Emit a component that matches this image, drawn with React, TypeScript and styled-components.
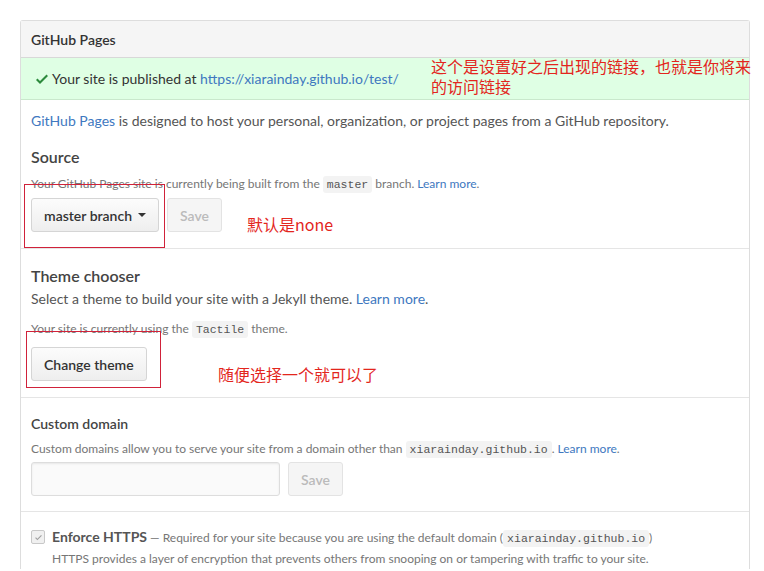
import React from "react";
import styled, { createGlobalStyle } from "styled-components";

const Global = createGlobalStyle`
  html, body { margin: 0; padding: 0; background: #fff; }
  body {
    font-family: Lato, "Open Sans", "Liberation Sans", sans-serif;
    font-size: 14px;
    color: #333;
  }
`;

const Page = styled.div`
  padding: 20px 14px 0 20px;
`;

const Box = styled.div`
  width: 728px;
  border: 1px solid #ddd;
  border-bottom: none;
  border-radius: 3px 3px 0 0;
  background: #fff;
`;

const BoxHeader = styled.div`
  height: 36px;
  display: flex;
  align-items: center;
  padding: 0 10px;
  background: #f5f5f5;
  border-bottom: 1px solid #d8d8d8;
  font-size: 14px;
  font-weight: 600;
  color: #333;
`;

const Flash = styled.div`
  position: relative;
  height: 41px;
  display: flex;
  align-items: center;
  gap: 4px;
  padding: 0 15px;
  background: #dfffe4;
  border-bottom: 1px solid #c9e8cc;
  color: #333;
`;

const Section = styled.div<{ $pt?: number; $pb?: number; $last?: boolean }>`
  position: relative;
  padding: ${(p) => p.$pt ?? 15}px 10px ${(p) => p.$pb ?? 15}px;
  border-bottom: ${(p) => (p.$last ? "none" : "1px solid #e5e5e5")};
`;

const Text = styled.p`
  margin: 0;
  font-size: 14px;
  line-height: 21px;
  color: #555;
`;

const Heading = styled.h3<{ $size?: number; $top?: number }>`
  margin: ${(p) => p.$top ?? 0}px 0 0;
  font-size: ${(p) => p.$size ?? 16}px;
  font-weight: 600;
  line-height: 24px;
  color: #444;
`;

const Note = styled.p<{ $top?: number }>`
  margin: ${(p) => p.$top ?? 2}px 0 0;
  font-size: 12px;
  line-height: 20px;
  color: #767676;
`;

const Link = styled.a`
  color: #4078c0;
  text-decoration: none;
`;

const Code = styled.code`
  font-family: "Liberation Mono", "DejaVu Sans Mono", monospace;
  font-size: 11.5px;
  padding: 2px 4px;
  background: #f3f3f3;
  border-radius: 3px;
  color: #555;
`;

const Row = styled.div<{ $top?: number }>`
  position: relative;
  display: flex;
  align-items: center;
  gap: 8px;
  margin-top: ${(p) => p.$top ?? 6}px;
`;

const Button = styled.button<{ $disabled?: boolean }>`
  height: 34px;
  padding: 0 12px;
  display: inline-flex;
  align-items: center;
  gap: 6px;
  font-family: inherit;
  font-size: 14px;
  font-weight: 600;
  border-radius: 3px;
  cursor: pointer;
  color: ${(p) => (p.$disabled ? "#bbb" : "#333")};
  background: ${(p) =>
    p.$disabled ? "#f5f5f5" : "linear-gradient(#fcfcfc, #eee)"};
  border: 1px solid ${(p) => (p.$disabled ? "#e3e3e3" : "#d5d5d5")};
`;

const Caret = styled.span`
  width: 0;
  height: 0;
  border-left: 4px solid transparent;
  border-right: 4px solid transparent;
  border-top: 4px solid #333;
`;

const Input = styled.input`
  width: 249px;
  height: 34px;
  box-sizing: border-box;
  border: 1px solid #ddd;
  border-radius: 3px;
  background: #fafafa;
  box-shadow: inset 0 1px 2px rgba(0, 0, 0, 0.075);
`;

const CheckRow = styled.div`
  display: flex;
  align-items: flex-start;
  gap: 7px;
`;

const CheckBox = styled.span`
  width: 12px;
  height: 12px;
  margin-top: 3px;
  border: 1px solid #c8c8c8;
  border-radius: 2px;
  background: #f0f0f0;
  display: flex;
  align-items: center;
  justify-content: center;
  flex-shrink: 0;
`;

const Strong = styled.strong`
  font-size: 14px;
  font-weight: 700;
  color: #555;
`;

const Small = styled.span`
  font-size: 12px;
  color: #767676;
`;

const CheckText = styled.div`
  line-height: 20px;
  font-size: 12px;
  color: #767676;
`;

const RedBox = styled.div<{ $l: number; $t: number; $w: number; $h: number }>`
  position: absolute;
  left: ${(p) => p.$l}px;
  top: ${(p) => p.$t}px;
  width: ${(p) => p.$w}px;
  height: ${(p) => p.$h}px;
  border: 1px solid #d0223a;
  pointer-events: none;
`;

const RedText = styled.div<{ $l: number; $t: number; $w?: number }>`
  position: absolute;
  left: ${(p) => p.$l}px;
  top: ${(p) => p.$t}px;
  ${(p) => (p.$w ? `width: ${p.$w}px;` : "white-space: nowrap;")}
  font-family: "Noto Sans CJK SC", "Noto Sans", sans-serif;
  font-size: 16px;
  line-height: 20px;
  color: #e3261d;
`;

const CheckIcon = () => (
  <svg width="12" height="16" viewBox="0 0 12 16" fill="#2c8a3c">
    <path d="M12 5l-8 8-4-4 1.5-1.5L4 10l6.5-6.5L12 5z" />
  </svg>
);

const SmallCheck = () => (
  <svg width="9" height="9" viewBox="0 0 12 16" fill="#a0a0a0">
    <path d="M12 5l-8 8-4-4 1.5-1.5L4 10l6.5-6.5L12 5z" />
  </svg>
);

export default function App() {
  return (
    <>
      <Global />
      <Page>
        <Box>
          <BoxHeader>GitHub Pages</BoxHeader>
          <Flash>
            <CheckIcon />
            <span>
              Your site is published at{" "}
              <Link href="#">https://xiarainday.github.io/test/</Link>
            </span>
            <RedText $l={410} $t={-2} $w={322}>
              这个是设置好之后出现的链接，也就是你将来的访问链接
            </RedText>
          </Flash>
          <Section $pt={10} $pb={16}>
            <Text>
              <Link href="#">GitHub Pages</Link> is designed to host your
              personal, organization, or project pages from a GitHub
              repository.
            </Text>
            <Heading $top={14}>Source</Heading>
            <Note $top={5}>
              Your GitHub Pages site is currently being built from the{" "}
              <Code>master</Code> branch. <Link href="#">Learn more</Link>.
            </Note>
            <Row $top={3}>
              <Button>
                master branch <Caret />
              </Button>
              <Button $disabled>Save</Button>
              <RedBox $l={-7} $t={-14} $w={139} $h={62} />
              <RedText $l={216} $t={16}>
                默认是none
              </RedText>
            </Row>
          </Section>
          <Section $pt={15} $pb={16}>
            <Heading>Theme chooser</Heading>
            <Text>
              Select a theme to build your site with a Jekyll theme.{" "}
              <Link href="#">Learn more</Link>.
            </Text>
            <Note $top={10}>
              Your site is currently using the <Code>Tactile</Code> theme.
            </Note>
            <Row $top={7}>
              <Button>Change theme</Button>
              <RedBox $l={-5} $t={-16} $w={133} $h={55} />
              <RedText $l={187} $t={17}>
                随便选择一个就可以了
              </RedText>
            </Row>
          </Section>
          <Section $pt={14}>
            <Heading $size={14} $top={0}>
              Custom domain
            </Heading>
            <Note $top={3}>
              Custom domains allow you to serve your site from a domain other
              than <Code>xiarainday.github.io</Code>.{" "}
              <Link href="#">Learn more</Link>.
            </Note>
            <Row $top={2}>
              <Input />
              <Button $disabled>Save</Button>
            </Row>
          </Section>
          <Section $last $pt={15} $pb={0}>
            <CheckRow>
              <CheckBox>
                <SmallCheck />
              </CheckBox>
              <CheckText>
                <Strong>Enforce HTTPS</Strong>{" "}
                <Small>
                  — Required for your site because you are using the default
                  domain (<Code>xiarainday.github.io</Code>)
                </Small>
                <br />
                HTTPS provides a layer of encryption that prevents others from
                snooping on or tampering with traffic to your site.
              </CheckText>
            </CheckRow>
          </Section>
        </Box>
      </Page>
    </>
  );
}
